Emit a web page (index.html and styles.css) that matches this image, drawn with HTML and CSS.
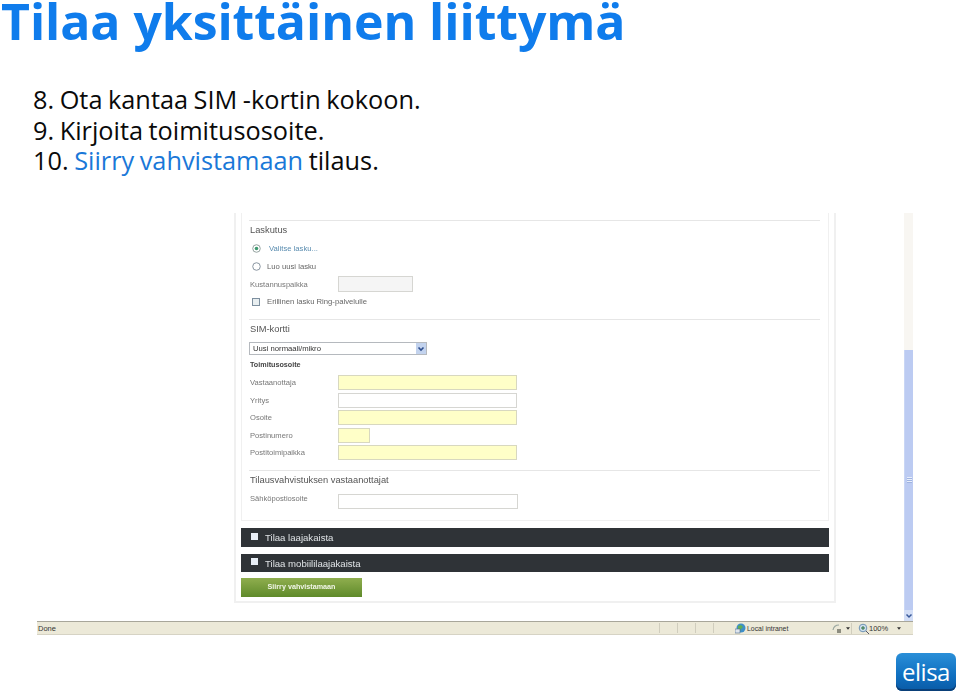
FILE: index.html
```html
<!DOCTYPE html>
<html lang="fi">
<head>
<meta charset="utf-8">
<title>Tilaa yksittäinen liittymä</title>
<link rel="stylesheet" href="styles.css">
</head>
<body>
<main class="slide">
  <h1 class="title">Tilaa yksittäinen liittymä</h1>
  <ol class="steps">
    <li><span class="num">8.</span> Ota kantaa SIM -kortin kokoon.</li>
    <li><span class="num">9.</span> Kirjoita toimitusosoite.</li>
    <li><span class="num">10.</span> <span class="hl">Siirry vahvistamaan</span> tilaus.</li>
  </ol>
  <section class="browser">
    <div class="viewport">
      <div class="panel">
        <div class="inner">
          <hr class="rule">
          <h2 class="sec">Laskutus</h2>
          <div class="opt o1"><svg class="radio" viewBox="0 0 10 10"><circle cx="5" cy="5" r="4.200" fill="#fff" stroke="#8a9a96"/><circle cx="5" cy="5" r="2" fill="#3f9a70"/></svg><span class="link">Valitse lasku...</span></div>
          <div class="opt o2"><svg class="radio" viewBox="0 0 10 10"><circle cx="5" cy="5" r="4.200" fill="#fff" stroke="#7d8a96"/></svg><span>Luo uusi lasku</span></div>
          <div class="row r18"><label class="lab">Kustannuspaikka</label><span class="inp gray"></span></div>
          <div class="opt o3"><span class="check"></span><span>Erillinen lasku Ring-palvelulle</span></div>
          <hr class="rule m9">
          <h2 class="sec">SIM-kortti</h2>
          <div class="select"><span>Uusi normaali/mikro</span><span class="arrow"><svg viewBox="0 0 8 8" width="8" height="8"><path d="M1.500 2.500 4 5l2.500-2.500" fill="none" stroke="#2f4f8f" stroke-width="1.600"/></svg></span></div>
          <h3 class="sub">Toimitusosoite</h3>
          <div class="fields">
            <div class="row r175"><label class="lab">Vastaanottaja</label><span class="inp yel w179"></span></div>
            <div class="row r175"><label class="lab">Yritys</label><span class="inp w179"></span></div>
            <div class="row r175"><label class="lab">Osoite</label><span class="inp yel w179"></span></div>
            <div class="row r175"><label class="lab">Postinumero</label><span class="inp yel w32"></span></div>
            <div class="row r175"><label class="lab">Postitoimipaikka</label><span class="inp yel w179"></span></div>
          </div>
          <hr class="rule m85">
          <h2 class="sec">Tilausvahvistuksen vastaanottajat</h2>
          <div class="row mail"><label class="lab">Sähköpostiosoite</label><span class="inp w180"></span></div>
        </div>
        <div class="bar b1"><span class="box"></span>Tilaa laajakaista</div>
        <div class="bar b2"><span class="box"></span>Tilaa mobiililaajakaista</div>
        <div class="cta">Siirry vahvistamaan</div>
      </div>
      <div class="scroll">
        <div class="track"></div>
        <div class="thumb"><span class="grip"></span></div>
        <div class="down"><svg viewBox="0 0 8 8" width="8" height="8"><path d="M1.500 2.500 4 5l2.500-2.500" fill="none" stroke="#3a5a9a" stroke-width="1.500"/></svg></div>
      </div>
    </div>
    <footer class="status">
      <span class="done">Done</span>
      <span class="cell c1"></span><span class="cell"></span><span class="cell"></span><span class="cell"></span>
      <span class="zone">
        <svg class="ico" viewBox="0 0 11 11"><circle cx="6" cy="5" r="4.500" fill="#3f8fc8"/><path d="M3 3l3-1 2 2-2 2-1 2-2-2z" fill="#5fae55"/><rect x="0" y="6" width="5" height="4" fill="#dfe6ee" stroke="#4a6a8a" stroke-width=".6"/></svg>
        <span>Local intranet</span>
      </span>
      <span class="tool t1"><svg class="ico" viewBox="0 0 11 11"><path d="M1 7Q2 2 7 2" fill="none" stroke="#9aa7a0" stroke-width="1.200"/><rect x="5" y="6" width="4" height="4" fill="#8d8d80"/></svg><svg class="caret" viewBox="0 0 5 3"><path d="M0 0h5L2.500 3z" fill="#333"/></svg></span>
      <span class="tool t2"><svg class="ico" viewBox="0 0 11 11"><circle cx="5" cy="5" r="3.800" fill="#cfe0ee" stroke="#6f93b4"/><path d="M3 5h4M5 3v4" stroke="#2f6f3f"/><path d="M8 8l3 3" stroke="#556"/></svg><span>100%</span><svg class="caret gap" viewBox="0 0 5 3"><path d="M0 0h5L2.500 3z" fill="#333"/></svg></span>
    </footer>
  </section>
  <div class="logo">elisa</div>
</main>
</body>
</html>
```
FILE: styles.css
```css
* { box-sizing: border-box; }
html, body { margin: 0; padding: 0; background: #fff; }
.slide { width: 960px; height: 695px; overflow: hidden; display: flex; flex-direction: column; font-family: "Liberation Sans", Arial, sans-serif; }
.title { margin: 0; height: 54px; padding-left: 1px; font: 700 50px/43px "Open Sans", sans-serif; color: #0f7cec; white-space: nowrap; letter-spacing: -.08px; }
.steps { list-style: none; margin: 30px 0 0; padding: 0 0 0 33px; height: 129px; font: 400 25.300px/30.500px "Open Sans", sans-serif; word-spacing: -1px; color: #0a0a0a; white-space: nowrap; }
.hl { color: #1a78d8; }
.browser { margin-left: 37px; width: 876px; height: 422px; display: flex; flex-direction: column; filter: blur(.5px); }
.viewport { flex: 1; display: flex; min-height: 0; }
.panel { margin-left: 197px; width: 602px; height: 390px; border: 2px solid #f0f0f0; border-top: 0; padding: 0 5px; }
.inner { width: 588px; height: 308px; padding: 7px 8px 0 7px; border: 1px solid #f0f0f0; border-top: 0; }
.rule { margin: 0; height: 1px; border: 0; background: #e6e6e6; }
.m9 { margin-top: 9px; }
.m85 { margin-top: 8.500px; }
.sec { margin: 0; height: 19px; padding-left: 1px; font: 400 9.300px/19px "Liberation Sans", sans-serif; color: #555; }
.opt { display: flex; align-items: center; font-size: 7.700px; color: #666; }
.o1 { height: 17px; padding-left: 3px; gap: 8px; }
.o2 { height: 18px; padding-left: 3px; gap: 6px; }
.o3 { height: 17px; padding-left: 3px; gap: 7px; }
.radio { width: 9px; height: 9px; flex: none; }
.link { color: #5b8db0; }
.check { width: 8px; height: 8px; border: 1px solid #7d8f9f; background: #e8eef0; }
.row { display: flex; align-items: center; }
.r18 { height: 18px; }
.r175 { height: 17.500px; }
.mail { height: 18px; align-items: flex-start; }
.mail .lab { margin-top: 3px; line-height: 12px; }
.mail .inp { margin-top: 4px; }
.lab { width: 89px; padding-left: 1px; font-size: 7.600px; color: #777; flex: none; }
.inp { height: 15px; border: 1px solid #d6d6d2; background: #fff; flex: none; }
.gray { height: 16px; background: #f5f5f5; width: 75px; }
.yel { background: #ffffc8; border-color: #d8d8c0; }
.w179 { width: 179px; }
.w180 { width: 180px; }
.w32 { width: 32px; }
.select { margin-top: 3px; width: 178px; height: 13px; display: flex; justify-content: space-between; align-items: center; padding-left: 3px; border: 1px solid #b5b9be; font-size: 7.700px; color: #333; background: #fff; }
.arrow { width: 10px; height: 11px; display: flex; align-items: center; justify-content: center; background: #c3d3ee; }
.sub { margin: 3px 0 1px; height: 14px; padding-left: 1px; font: 700 7.200px/14px "Liberation Sans", sans-serif; color: #444; }
.fields { margin-top: 2px; }
.bar { width: 587.500px; display: flex; align-items: center; gap: 7px; padding-left: 10px; background: #2f3337; color: #dfe3e6; font-size: 9.600px; }
.b1 { height: 19px; margin-top: 7px; }
.b2 { height: 18px; margin-top: 7px; }
.box { width: 7px; height: 7px; margin-top: -3px; background: #e8eef6; }
.cta { margin-top: 6px; width: 121px; height: 19px; text-align: center; font: 700 7.200px/18px "Liberation Sans", sans-serif; color: #f2f6e8; background: linear-gradient(#8fae4e, #5f8a2a); }
.scroll { margin-left: 68px; width: 9px; display: flex; flex-direction: column; }
.track { height: 137px; background: #f8f6f2; }
.thumb { flex: 1; display: flex; align-items: center; justify-content: center; background: #bccbf2; border-left: 1px solid #c9d6f5; }
.grip { width: 5px; height: 6px; background: repeating-linear-gradient(#e8eefb 0 1px, #9fb3e0 1px 2px); }
.down { height: 11px; display: flex; align-items: center; justify-content: center; background: #d3def6; }
.status { height: 14px; flex: none; display: flex; align-items: center; border-top: 1px solid #a8a69a; border-bottom: 1px solid #d6d3c4; background: #ece9d8; font-size: 7.500px; color: #333; }
.done { width: 607px; padding-left: 1px; }
.cell { width: 18px; height: 10px; border-right: 1px solid #d0cdbd; }
.c1 { width: 16px; }
.zone { margin-left: 21px; width: 97px; display: flex; align-items: center; gap: 1px; font-size: 6.900px; }
.tool { display: flex; align-items: center; gap: 3px; }
.t1 { width: 19px; }
.t2 { border-left: 1px solid #d0cdbd; padding-left: 6px; gap: 0; }
.ico { width: 11px; height: 11px; flex: none; }
.caret { width: 4px; height: 3px; flex: none; }
.gap { margin-left: 9px; }
.logo { margin: 18px 0 0 896px; width: 60px; height: 38px; border-radius: 6px; background: linear-gradient(#2a8fd8, #0f6fc0 60%, #0a5aa5); box-shadow: inset 0 -2px 0 #0a3f78; color: #fff; font: 400 24px/37px "Open Sans", sans-serif; text-align: center; letter-spacing: -.5px; }
```
